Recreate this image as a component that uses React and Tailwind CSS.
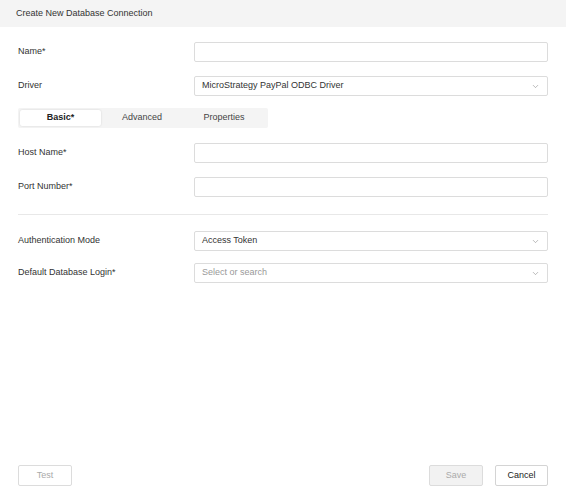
import { ChevronDown } from "lucide-react";

function Row({ label, children }) {
  return (
    <div className="flex items-center h-[20px]">
      <div className="w-[176px] text-[9px] text-[#333]">{label}</div>
      <div className="flex-1">{children}</div>
    </div>
  );
}

function TextBox() {
  return <div className="h-[20px] border border-[#dcdcdc] rounded-[2px] bg-white" />;
}

function Select({ value, placeholder }) {
  return (
    <div className="h-[20px] border border-[#dcdcdc] rounded-[2px] bg-white flex items-center justify-between pl-[7px] pr-[7px]">
      <span className={value ? "text-[9px] text-[#333]" : "text-[9px] text-[#999]"}>
        {value || placeholder}
      </span>
      <ChevronDown size={9} strokeWidth={1.5} className="text-[#888]" />
    </div>
  );
}

export default function App() {
  const tabs = ["Basic*", "Advanced", "Properties"];

  return (
    <div
      className="w-[566px] h-[495px] bg-white flex flex-col"
      style={{ fontFamily: "'Liberation Sans', Arial, sans-serif" }}
    >
      {/* header */}
      <div className="h-[27px] bg-[#f4f4f4] flex items-center pl-[16px] text-[9px] text-[#333]">
        Create New Database Connection
      </div>

      <div className="flex-1 px-[18px] flex flex-col">
        <div className="mt-[15px] flex flex-col gap-[14px]">
          <Row label="Name*">
            <TextBox />
          </Row>
          <Row label="Driver">
            <Select value="MicroStrategy PayPal ODBC Driver" />
          </Row>
        </div>

        {/* tabs */}
        <div className="mt-[12px] w-[250px] h-[20px] bg-[#f4f4f4] rounded-[2px] p-[2px] flex">
          {tabs.map((t, i) => (
            <div
              key={t}
              className={
                i === 0
                  ? "w-[81px] bg-white rounded-[2px] shadow-[0_0_2px_rgba(0,0,0,0.15)] flex items-center justify-center text-[9px] text-[#222] font-bold"
                  : "w-[82px] flex items-center justify-center text-[9px] text-[#444]"
              }
            >
              {t}
            </div>
          ))}
        </div>

        <div className="mt-[15px] flex flex-col gap-[14px]">
          <Row label="Host Name*">
            <TextBox />
          </Row>
          <Row label="Port Number*">
            <TextBox />
          </Row>
        </div>

        <div className="mt-[17px] border-t border-[#e8e8e8]" />

        <div className="mt-[16px] flex flex-col gap-[12px]">
          <Row label="Authentication Mode">
            <Select value="Access Token" />
          </Row>
          <Row label="Default Database Login*">
            <Select placeholder="Select or search" />
          </Row>
        </div>

        {/* footer */}
        <div className="mt-auto mb-[9px] flex items-center justify-between">
          <button className="w-[54px] h-[21px] border border-[#dcdcdc] rounded-[2px] bg-white text-[9px] text-[#aaa]">
            Test
          </button>
          <div className="flex gap-[12px]">
            <button className="w-[54px] h-[21px] border border-[#dcdcdc] rounded-[2px] bg-[#f2f2f2] text-[9px] text-[#aaa]">
              Save
            </button>
            <button className="w-[53px] h-[21px] border border-[#d4d4d4] rounded-[2px] bg-white text-[9px] text-[#222]">
              Cancel
            </button>
          </div>
        </div>
      </div>
    </div>
  );
}
